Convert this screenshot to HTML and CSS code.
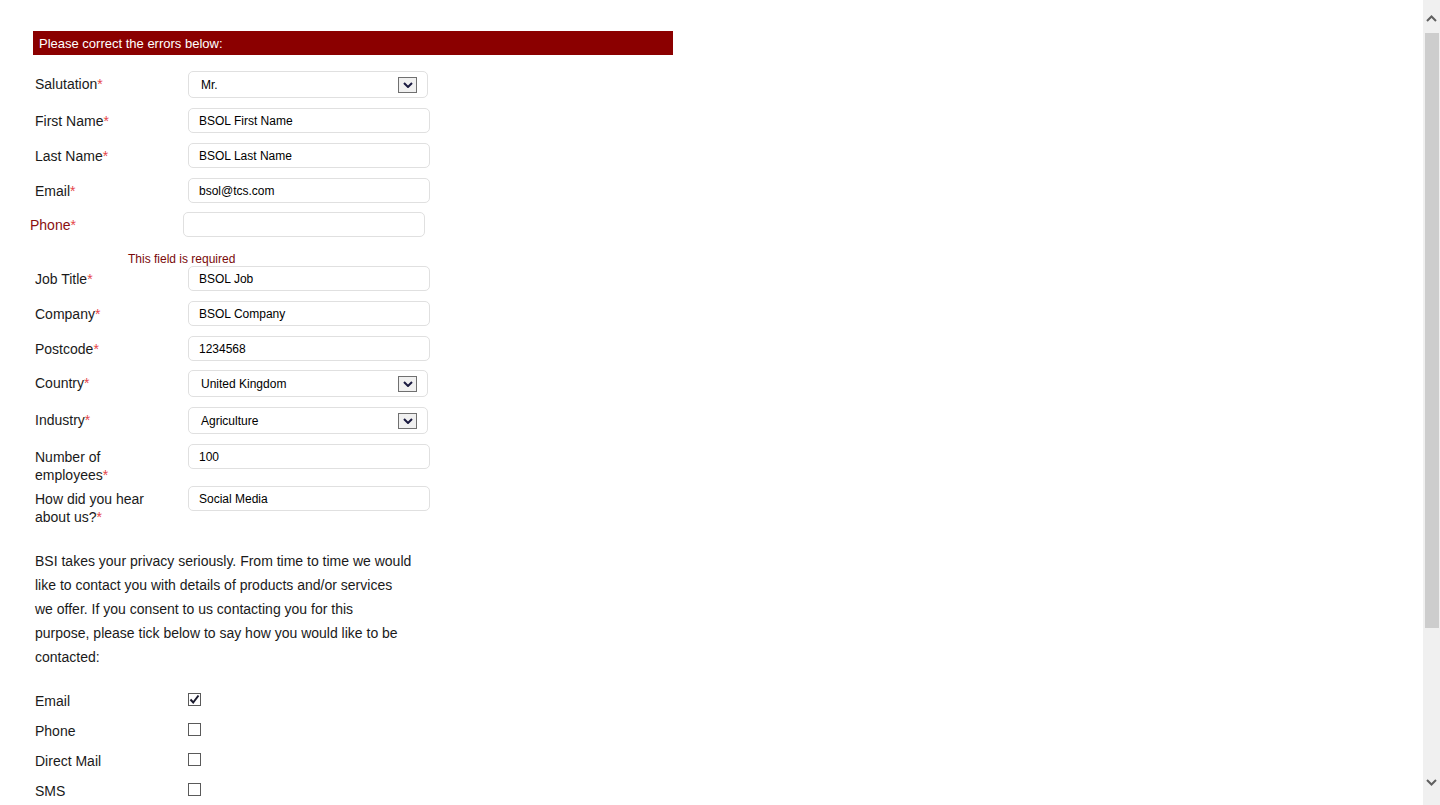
FILE: index.html
```html
<!DOCTYPE html>
<html lang="en">
<head>
<meta charset="utf-8">
<title>Contact form</title>
<link rel="stylesheet" href="styles.css">
</head>
<body>
<div class="page">
  <main class="content">
    <form class="form">
      <div class="error-banner">Please correct the errors below:</div>

      <div class="row row-select">
        <label class="lbl">Salutation<span class="req">*</span></label>
        <div class="select"><span>Mr.</span><span class="arrow"><svg width="10" height="6" viewBox="0 0 10 6"><path d="M1 1 L5 5 L9 1" fill="none" stroke="#1a1a40" stroke-width="2"/></svg></span></div>
      </div>
      <div class="row">
        <label class="lbl">First Name<span class="req">*</span></label>
        <div class="input">BSOL First Name</div>
      </div>
      <div class="row">
        <label class="lbl">Last Name<span class="req">*</span></label>
        <div class="input">BSOL Last Name</div>
      </div>
      <div class="row row-before-error">
        <label class="lbl">Email<span class="req">*</span></label>
        <div class="input">bsol@tcs.com</div>
      </div>
      <div class="row row-error">
        <label class="lbl lbl-error">Phone<span class="req">*</span></label>
        <div class="input"></div>
      </div>
      <div class="field-error">This field is required</div>
      <div class="row">
        <label class="lbl">Job Title<span class="req">*</span></label>
        <div class="input">BSOL Job</div>
      </div>
      <div class="row">
        <label class="lbl">Company<span class="req">*</span></label>
        <div class="input">BSOL Company</div>
      </div>
      <div class="row row-before-select">
        <label class="lbl">Postcode<span class="req">*</span></label>
        <div class="input">1234568</div>
      </div>
      <div class="row row-select">
        <label class="lbl">Country<span class="req">*</span></label>
        <div class="select"><span>United Kingdom</span><span class="arrow"><svg width="10" height="6" viewBox="0 0 10 6"><path d="M1 1 L5 5 L9 1" fill="none" stroke="#1a1a40" stroke-width="2"/></svg></span></div>
      </div>
      <div class="row row-select">
        <label class="lbl">Industry<span class="req">*</span></label>
        <div class="select"><span>Agriculture</span><span class="arrow"><svg width="10" height="6" viewBox="0 0 10 6"><path d="M1 1 L5 5 L9 1" fill="none" stroke="#1a1a40" stroke-width="2"/></svg></span></div>
      </div>
      <div class="row row-tall">
        <label class="lbl">Number of employees<span class="req">*</span></label>
        <div class="input">100</div>
      </div>
      <div class="row row-tall">
        <label class="lbl">How did you hear about us?<span class="req">*</span></label>
        <div class="input">Social Media</div>
      </div>

      <p class="privacy">BSI takes your privacy seriously. From time to time we would<br>like to contact you with details of products and/or services<br>we offer. If you consent to us contacting you for this<br>purpose, please tick below to say how you would like to be<br>contacted:</p>

      <div class="check-row">
        <span class="check-lbl">Email</span>
        <span class="checkbox checked"><svg width="11" height="11" viewBox="0 0 11 11"><path d="M1.5 5.5 L4.2 8.5 L9.5 1.5" fill="none" stroke="#1a1a2e" stroke-width="2"/></svg></span>
      </div>
      <div class="check-row">
        <span class="check-lbl">Phone</span>
        <span class="checkbox"></span>
      </div>
      <div class="check-row">
        <span class="check-lbl">Direct Mail</span>
        <span class="checkbox"></span>
      </div>
      <div class="check-row">
        <span class="check-lbl">SMS</span>
        <span class="checkbox"></span>
      </div>
    </form>
  </main>
  <div class="scrollbar">
    <div class="sb-btn sb-up"><svg width="11" height="7" viewBox="0 0 11 7"><path d="M1 6 L5.5 1.5 L10 6" fill="none" stroke="#606060" stroke-width="2"/></svg></div>
    <div class="sb-thumb"></div>
    <div class="sb-track"></div>
    <div class="sb-btn sb-down"><svg width="11" height="7" viewBox="0 0 11 7"><path d="M1 1 L5.5 5.5 L10 1" fill="none" stroke="#606060" stroke-width="2"/></svg></div>
  </div>
</div>
</body>
</html>
```
FILE: styles.css
```css
html, body {
  margin: 0;
  padding: 0;
  background: #fff;
}

body {
  font-family: "Liberation Sans", Arial, sans-serif;
  color: #1a1a1a;
}

.page {
  display: flex;
  height: 805px;
  overflow: hidden;
}

.content {
  flex: 1;
  padding: 31px 0 0 33px;
  overflow: hidden;
}

.form {
  width: 640px;
}

.error-banner {
  width: 640px;
  height: 24px;
  line-height: 25px;
  box-sizing: border-box;
  padding-left: 6px;
  background: #8b0000;
  color: #fff;
  font-size: 13px;
  margin-bottom: 16px;
}

.row {
  display: flex;
  align-items: center;
  margin-bottom: 10px;
}

.row-before-error,
.row-before-select {
  margin-bottom: 9px;
}

.lbl {
  width: 155px;
  box-sizing: border-box;
  padding-left: 2px;
  font-size: 14px;
  line-height: 18px;
  color: #1a1a1a;
}

.row-select .lbl {
  margin-top: -1px;
}

.req {
  color: #e5464a;
}

.lbl-error {
  color: #8b1010;
}

.row-error {
  margin-left: -5px;
  margin-bottom: 16px;
}

.field-error {
  padding-left: 95px;
  font-size: 12px;
  line-height: 13px;
  color: #7a0a0a;
}

.row-tall {
  align-items: flex-start;
  margin-bottom: 2px;
}

.row-tall .lbl {
  padding-top: 4px;
  padding-right: 20px;
}

.input,
.select {
  box-sizing: border-box;
  border: 1px solid #e0e0e0;
  border-radius: 5px;
  font-size: 12px;
  color: #000;
  background: #fff;
}

.input {
  width: 242px;
  height: 25px;
  line-height: 23px;
  padding: 1px 0 0 10px;
}

.select {
  width: 240px;
  height: 27px;
  display: flex;
  align-items: center;
  justify-content: space-between;
  padding: 1px 10px 0 12px;
}

.arrow {
  width: 19px;
  height: 16px;
  box-sizing: border-box;
  border: 1px solid #707070;
  background: #f0f0f0;
  display: flex;
  align-items: center;
  justify-content: center;
  margin-top: -1px;
}

.privacy {
  margin: 23px 0 17px;
  padding-left: 2px;
  font-size: 14px;
  line-height: 24px;
  color: #1a1a1a;
}

.check-row {
  display: flex;
  align-items: center;
  height: 30px;
}

.check-lbl {
  width: 155px;
  box-sizing: border-box;
  padding-left: 2px;
  font-size: 14px;
}

.checkbox {
  width: 13px;
  height: 13px;
  box-sizing: border-box;
  border: 1px solid #5a5a5a;
  background: #fff;
  display: flex;
  align-items: center;
  justify-content: center;
  margin-top: -3px;
}

.scrollbar {
  width: 17px;
  height: 805px;
  background: #f0f0f0;
  display: flex;
  flex-direction: column;
}

.sb-btn {
  height: 33px;
  display: flex;
  justify-content: center;
}

.sb-up {
  align-items: flex-start;
  padding-top: 15px;
  box-sizing: border-box;
}

.sb-down {
  align-items: flex-end;
  padding-bottom: 19px;
  box-sizing: border-box;
}

.sb-thumb {
  height: 595px;
  margin: 0 1px 0 2px;
  background: #cdcdcd;
}

.sb-track {
  flex: 1;
}
```
